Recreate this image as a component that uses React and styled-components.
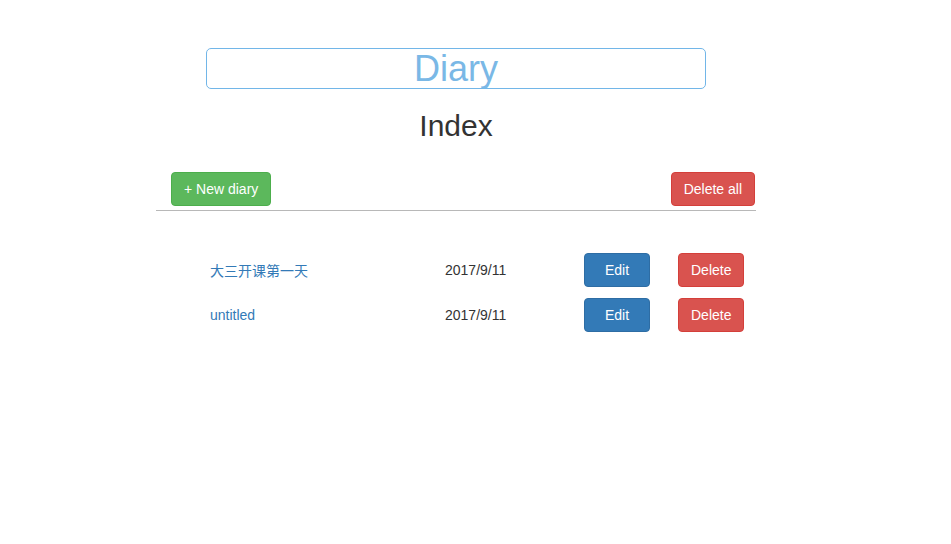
import React from 'react'
import styled, { createGlobalStyle } from 'styled-components'

const GlobalStyle = createGlobalStyle`
  body {
    margin: 0;
    background: #fff;
    font-family: "Liberation Sans", Arial, "Noto Sans CJK SC", sans-serif;
    font-size: 14px;
    color: #333;
  }
`

const Page = styled.div`
  width: 912px;
  padding-top: 48px;
  display: flex;
  flex-direction: column;
  align-items: center;
`

const TitleInput = styled.input`
  box-sizing: border-box;
  width: 500px;
  height: 41px;
  padding: 0;
  border: 1px solid #72b6e8;
  border-radius: 5px;
  font-family: "Liberation Sans", Arial, sans-serif;
  font-size: 36px;
  line-height: 39px;
  color: #7ab8e6;
  text-align: center;
  outline: none;
`

const Heading = styled.h1`
  margin: 20px 0 0;
  font-size: 30px;
  font-weight: 400;
  line-height: 33px;
  color: #333;
`

const Panel = styled.div`
  width: 600px;
  margin-top: 30px;
`

const Toolbar = styled.div`
  display: flex;
  justify-content: space-between;
  padding: 0 1px 4px 15px;
  border-bottom: 1px solid #b8b8b8;
`

const Button = styled.button`
  box-sizing: border-box;
  height: 34px;
  padding: 6px 12px;
  width: ${p => (p.$width ? `${p.$width}px` : 'auto')};
  font-family: "Liberation Sans", Arial, sans-serif;
  font-size: 14px;
  line-height: 20px;
  color: #fff;
  border-radius: 4px;
  border: 1px solid ${p => p.$border};
  background: ${p => p.$bg};
  cursor: pointer;
`

const List = styled.div`
  display: flex;
  flex-direction: column;
  gap: 11px;
  padding: 42px 0 0 54px;
`

const Row = styled.div`
  display: grid;
  grid-template-columns: 235px 139px 94px 66px;
  align-items: center;
`

const TitleLink = styled.a`
  color: #337ab7;
  text-decoration: none;
  font-family: "Liberation Sans", Arial, "Noto Sans CJK SC", sans-serif;
`

const DateText = styled.span`
  color: #333;
`

const colors = {
  green: ['#5cb85c', '#4cae4c'],
  red: ['#d9534f', '#d43f3a'],
  blue: ['#337ab7', '#2e6da4'],
}

const Btn = ({ kind, width, children }) => (
  <Button $bg={colors[kind][0]} $border={colors[kind][1]} $width={width}>
    {children}
  </Button>
)

const diaries = [
  { title: '大三开课第一天', date: '2017/9/11' },
  { title: 'untitled', date: '2017/9/11' },
]

export default function App() {
  return (
    <>
      <GlobalStyle />
      <Page>
        <TitleInput defaultValue="Diary" />
        <Heading>Index</Heading>
        <Panel>
          <Toolbar>
            <Btn kind="green">+ New diary</Btn>
            <Btn kind="red">Delete all</Btn>
          </Toolbar>
          <List>
            {diaries.map((d, i) => (
              <Row key={i}>
                <TitleLink href="#">{d.title}</TitleLink>
                <DateText>{d.date}</DateText>
                <Btn kind="blue" width={66}>Edit</Btn>
                <Btn kind="red" width={66}>Delete</Btn>
              </Row>
            ))}
          </List>
        </Panel>
      </Page>
    </>
  )
}
